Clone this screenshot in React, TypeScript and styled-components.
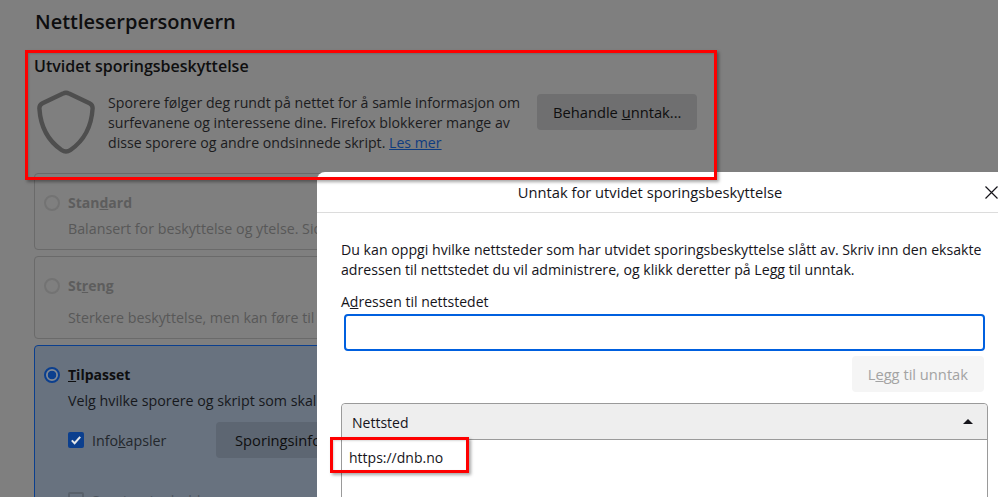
import React from 'react';
import styled, { createGlobalStyle } from 'styled-components';

const GlobalStyle = createGlobalStyle`
  html, body {
    margin: 0;
    padding: 0;
    background: #7f7f7f;
    overflow: hidden;
  }
  body {
    font-family: "Open Sans", "Noto Sans", sans-serif;
    font-size: 14px;
    color: #0e0e0f;
  }
`;

const Page = styled.div`
  position: relative;
  width: 998px;
  height: 497px;
  overflow: hidden;
  background: #7f7f7f;
  box-sizing: border-box;
  padding: 8px 0 0 34px;
`;

const Title = styled.h1`
  margin: 0 0 19px 1px;
  font-size: 20px;
  line-height: 28px;
  font-weight: 600;
  color: #0e0e0f;
`;

const SectionTitle = styled.h2`
  margin: 0 0 13px;
  font-size: 16px;
  line-height: 22px;
  font-weight: 600;
  color: #0e0e0f;
`;

const Intro = styled.div`
  display: flex;
  align-items: flex-start;
  height: 64px;
  margin-bottom: 19px;
`;

const ShieldIcon = styled.svg`
  width: 58px;
  height: 64px;
  margin: 0 13px 0 3px;
  flex: none;
`;

const IntroText = styled.p`
  width: 420px;
  margin: 3px 9px 0 0;
  font-size: 14.15px;
  line-height: 20px;
  color: #1c1c1e;
`;

const Link = styled.a`
  color: #0f3c80;
  text-decoration: underline;
`;

const Button = styled.div<{ $muted?: boolean }>`
  display: flex;
  align-items: center;
  justify-content: center;
  flex: none;
  box-sizing: border-box;
  height: 36px;
  padding: 0 16px;
  border-radius: 4px;
  background: ${(p) => (p.$muted ? '#f5f5f5' : '#6f6f70')};
  color: ${(p) => (p.$muted ? '#a3a3a3' : '#0e0e0f')};
  font-size: 14.7px;
  font-weight: 500;
  white-space: nowrap;
`;

const IntroButton = styled(Button)`
  margin-top: 4px;
`;

const AccessKey = styled.span`
  text-decoration: underline;
`;

const Card = styled.div<{ $height: number; $selected?: boolean }>`
  box-sizing: border-box;
  width: 690px;
  height: ${(p) => p.$height}px;
  margin-bottom: 6px;
  padding: 18px 9px 0;
  border: 1px solid ${(p) => (p.$selected ? '#0b3f8e' : '#6a6a6a')};
  border-radius: 4px;
  background: ${(p) => (p.$selected ? '#68727f' : 'transparent')};
`;

const CardHead = styled.div`
  display: flex;
  align-items: center;
  gap: 8px;
  height: 22px;
`;

const Radio = styled.span<{ $on?: boolean }>`
  box-sizing: border-box;
  width: 16px;
  height: 16px;
  flex: none;
  border-radius: 50%;
  border: 2px solid ${(p) => (p.$on ? '#0b3f8e' : '#737373')};
  background: ${(p) => (p.$on ? 'radial-gradient(circle, #0b3f8e 0 4px, #7f8894 4.6px)' : 'transparent')};
`;

const CardLabel = styled.span<{ $on?: boolean }>`
  margin-top: -2px;
  font-size: 14px;
  font-weight: 700;
  color: ${(p) => (p.$on ? '#0e0e0f' : '#5d5d5d')};
`;

const CardText = styled.p<{ $gap: number; $on?: boolean }>`
  margin: ${(p) => p.$gap}px 0 0 24px;
  font-size: 14.25px;
  line-height: 20px;
  white-space: nowrap;
  color: ${(p) => (p.$on ? '#16181c' : '#585858')};
`;

const OptionRow = styled.div<{ $gap: number }>`
  display: flex;
  align-items: center;
  height: 36px;
  margin: ${(p) => p.$gap}px 0 0 24px;
`;

const CheckBox = styled.span<{ $on?: boolean }>`
  box-sizing: border-box;
  display: flex;
  align-items: center;
  justify-content: center;
  width: 16px;
  height: 16px;
  flex: none;
  margin-right: 8px;
  border-radius: 2px;
  background: ${(p) => (p.$on ? '#0b3f8e' : 'transparent')};
  border: ${(p) => (p.$on ? 'none' : '2px solid #59616b')};
`;

const OptionText = styled.span<{ $faded?: boolean }>`
  width: 124px;
  flex: none;
  font-size: 14.25px;
  color: ${(p) => (p.$faded ? '#4e5660' : '#23272c')};
`;

const CardButton = styled(Button)`
  background: #5d6672;
  padding: 0 19px;
`;

const Dialog = styled.div`
  position: absolute;
  left: 317px;
  top: 172px;
  width: 696px;
  height: 340px;
  background: #fff;
  border-radius: 8px 8px 0 0;
  color: #15141a;
`;

const DialogHead = styled.div`
  display: flex;
  align-items: center;
  height: 40px;
  padding-right: 30px;
  border-bottom: 1px solid #dcdcdc;
  font-size: 14.7px;
`;

const DialogTitle = styled.div`
  flex: 1;
  text-align: center;
`;

const CloseIcon = styled.svg`
  position: absolute;
  left: 668px;
  top: 14px;
  width: 13px;
  height: 13px;
`;

const DialogBody = styled.div`
  padding: 27px 0 0 24px;
`;

const DialogText = styled.p`
  width: 650px;
  margin: 0 0 12px;
  font-size: 14.15px;
  line-height: 20px;
`;

const FieldLabel = styled.div`
  font-size: 14px;
  line-height: 20px;
  margin-bottom: 2px;
`;

const AddressInput = styled.input`
  display: block;
  box-sizing: border-box;
  width: 641px;
  height: 37px;
  margin-left: 3px;
  border: 2px solid #0060df;
  border-radius: 4px;
  outline: none;
  background: #fff;
`;

const AddRow = styled.div`
  display: flex;
  justify-content: flex-end;
  width: 643px;
  margin: 5px 0 11px;
`;

const SiteTable = styled.div`
  box-sizing: border-box;
  width: 647px;
  height: 120px;
  border: 1px solid #9a9a9a;
  border-radius: 4px 4px 0 0;
`;

const TableHead = styled.div`
  display: flex;
  align-items: center;
  justify-content: space-between;
  box-sizing: border-box;
  height: 36px;
  padding: 2px 14px 0 10px;
  background: #eeeeee;
  border-bottom: 1px solid #9a9a9a;
  border-radius: 4px 4px 0 0;
  font-size: 14px;
`;

const SortArrow = styled.span`
  width: 0;
  height: 0;
  margin-bottom: 2px;
  border-left: 5px solid transparent;
  border-right: 5px solid transparent;
  border-bottom: 5px solid #15141a;
`;

const TableRow = styled.div`
  padding: 8px 0 0 7px;
  font-size: 14px;
  line-height: 20px;
`;

const Highlight = styled.div<{ $left: number; $top: number; $width: number; $height: number }>`
  position: absolute;
  box-sizing: border-box;
  left: ${(p) => p.$left}px;
  top: ${(p) => p.$top}px;
  width: ${(p) => p.$width}px;
  height: ${(p) => p.$height}px;
  border: 3px solid #fe0000;
  box-shadow: 2px 2px 3px rgba(0, 0, 0, 0.35), inset 1px 1px 2px rgba(0, 0, 0, 0.15);
  pointer-events: none;
`;

const App = (): JSX.Element => {
  return (
    <Page>
      <GlobalStyle />
      <Title>Nettleserpersonvern</Title>
      <SectionTitle>Utvidet sporingsbeskyttelse</SectionTitle>
      <Intro>
        <ShieldIcon viewBox="0 0 58 64" fill="none">
          <path
            d="M26 3.6 Q29 2 32 3.6 L52.5 13.2 Q55.8 14.8 55.6 18.5 C54.4 38 45 52 33.5 60 Q29 63 24.5 60 C13 52 3.6 38 2.4 18.5 Q2.2 14.8 5.5 13.2 Z"
            stroke="#4e4e4e"
            strokeWidth="4.4"
            strokeLinejoin="round"
          />
        </ShieldIcon>
        <IntroText>
          Sporere følger deg rundt på nettet for å samle informasjon om surfevanene og interessene dine. Firefox
          blokkerer mange av disse sporere og andre ondsinnede skript. <Link>Les mer</Link>
        </IntroText>
        <IntroButton>
          Behandle&nbsp;<AccessKey>u</AccessKey>nntak...
        </IntroButton>
      </Intro>

      <Card $height={77}>
        <CardHead>
          <Radio />
          <CardLabel>
            Stan<AccessKey>d</AccessKey>ard
          </CardLabel>
        </CardHead>
        <CardText $gap={5}>Balansert for beskyttelse og ytelse. Sider vil lastes normalt.</CardText>
      </Card>
      <Card $height={83}>
        <CardHead>
          <Radio />
          <CardLabel>
            St<AccessKey>r</AccessKey>eng
          </CardLabel>
        </CardHead>
        <CardText $gap={11}>Sterkere beskyttelse, men kan føre til at noen nettsteder slutter å virke.</CardText>
      </Card>
      <Card $height={200} $selected>
        <CardHead>
          <Radio $on />
          <CardLabel $on>
            <AccessKey>T</AccessKey>ilpasset
          </CardLabel>
        </CardHead>
        <CardText $gap={5} $on>
          Velg hvilke sporere og skript som skal blokkeres.
        </CardText>
        <OptionRow $gap={11}>
          <CheckBox $on>
            <svg width="12" height="12" viewBox="0 0 12 12" fill="none">
              <path d="M1.8 6.4 L4.6 9.2 L10.2 2.8" stroke="#e4e7ea" strokeWidth="2" />
            </svg>
          </CheckBox>
          <OptionText>
            Info<AccessKey>k</AccessKey>apsler
          </OptionText>
          <CardButton>Sporingsinfokapsler</CardButton>
        </OptionRow>
        <OptionRow $gap={24}>
          <CheckBox />
          <OptionText $faded>Sporingsinnhold</OptionText>
        </OptionRow>
      </Card>

      <Dialog>
        <DialogHead>
          <DialogTitle>Unntak for utvidet sporingsbeskyttelse</DialogTitle>
          <CloseIcon viewBox="0 0 13 13" fill="none">
            <path d="M0.5 0.5 L12.5 12.5 M12.5 0.5 L0.5 12.5" stroke="#15141a" strokeWidth="1.2" />
          </CloseIcon>
        </DialogHead>
        <DialogBody>
          <DialogText>
            Du kan oppgi hvilke nettsteder som har utvidet sporingsbeskyttelse slått av. Skriv inn den eksakte adressen
            til nettstedet du vil administrere, og klikk deretter på Legg til unntak.
          </DialogText>
          <FieldLabel>
            A<AccessKey>d</AccessKey>ressen til nettstedet
          </FieldLabel>
          <AddressInput />
          <AddRow>
            <Button $muted>
              L<AccessKey>e</AccessKey>gg til unntak
            </Button>
          </AddRow>
          <SiteTable>
            <TableHead>
              Nettsted
              <SortArrow />
            </TableHead>
            <TableRow>https://dnb.no</TableRow>
          </SiteTable>
        </DialogBody>
      </Dialog>

      <Highlight $left={25} $top={50} $width={692} $height={130} />
      <Highlight $left={330} $top={437} $width={139} $height={36} />
    </Page>
  );
};

export default App;
